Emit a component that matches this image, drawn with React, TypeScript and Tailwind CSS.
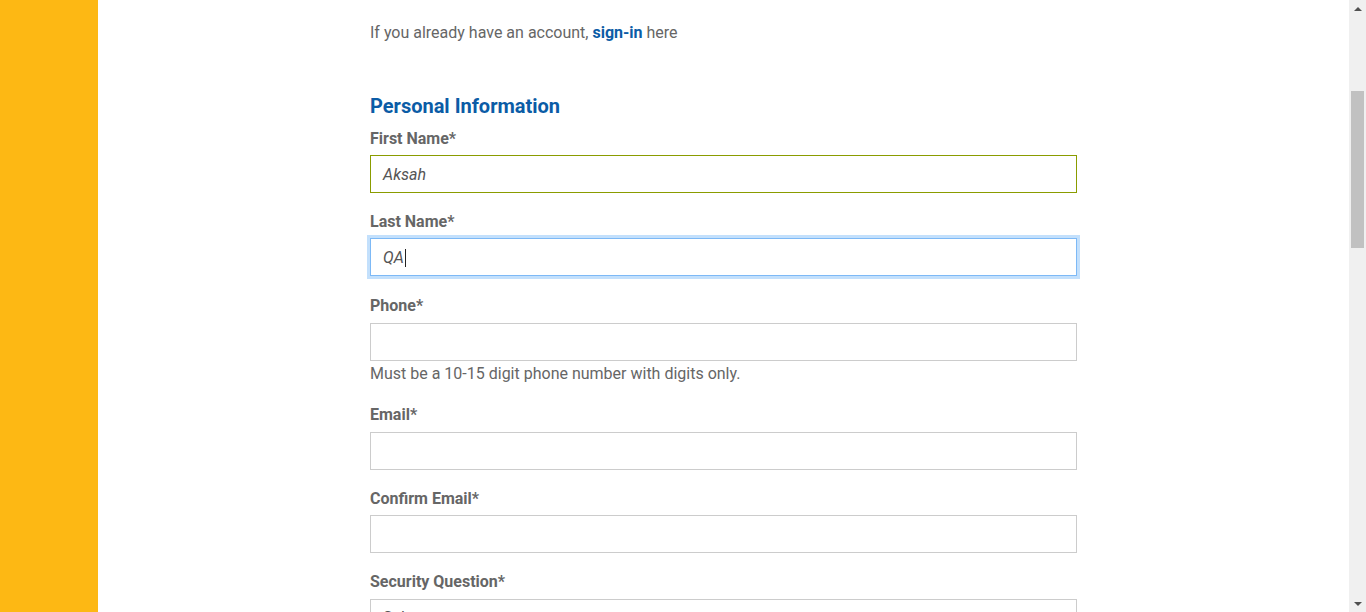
import React from 'react'

const font = { fontFamily: 'Roboto, "Liberation Sans", sans-serif' }

function Label({ children, className = '' }: { children: React.ReactNode; className?: string }) {
  return (
    <div className={`text-[16px] leading-[20px] font-bold text-[#666666] ${className}`}>{children}</div>
  )
}

function Field({
  value,
  variant = 'plain',
  caret = false,
  className = 'mt-[6px]',
}: {
  value?: string
  variant?: 'plain' | 'valid' | 'focus'
  caret?: boolean
  className?: string
}) {
  const border =
    variant === 'valid'
      ? 'border-[#8a9c00]'
      : variant === 'focus'
        ? 'border-[#7db9f6] shadow-[0_0_0_3px_#c3e0fc]'
        : 'border-[#cccccc]'
  return (
    <div className={`h-[38px] w-full border bg-white flex items-center px-3 pt-[2px] ${border} ${className}`}>
      {value && (
        <span className="italic text-[16px] text-[#555555] flex items-center">
          {value}
          {caret && <span className="inline-block w-px h-[18px] bg-[#222222] ml-px" />}
        </span>
      )}
    </div>
  )
}

export default function App() {
  return (
    <div className="flex h-screen w-full overflow-hidden bg-white" style={font}>
      {/* left stripe */}
      <div className="w-[98px] shrink-0 bg-[#fdb814]" />

      {/* form */}
      <main className="flex-1 overflow-hidden">
        <div className="ml-[272px] w-[707px] pt-[23px]">
          <p className="text-[16px] leading-[20px] text-[#666666]">
            If you already have an account, <a className="font-bold text-[#0b5ca6]">sign-in</a> here
          </p>

          <h2 className="mt-[51px] text-[20px] leading-[24px] font-bold text-[#0b5ca6]">Personal Information</h2>

          <Label className="mt-[11px]">First Name*</Label>
          <Field value="Aksah" variant="valid" />

          <Label className="mt-[19px]">Last Name*</Label>
          <Field value="QA" variant="focus" caret />

          <Label className="mt-[20px]">Phone*</Label>
          <Field className="mt-[7px]" />
          <p className="mt-[3px] text-[16px] leading-[20px] text-[#666666]">
            Must be a 10-15 digit phone number with digits only.
          </p>

          <Label className="mt-[21px]">Email*</Label>
          <Field className="mt-[7px]" />

          <Label className="mt-[19px]">Confirm Email*</Label>
          <Field />

          <Label className="mt-[19px]">Security Question*</Label>
          <div className="mt-[7px] h-[38px] w-full border border-[#cccccc] flex items-center px-3 text-[16px] text-[#555555]">
            Select...
          </div>
        </div>
      </main>

      {/* scrollbar */}
      <div className="w-[17px] shrink-0 bg-[#f0f0f0] flex flex-col items-center">
        <div className="h-[17px] flex items-center justify-center">
          <div className="w-0 h-0 border-l-[4px] border-r-[4px] border-b-[4px] border-l-transparent border-r-transparent border-b-[#505050]" />
        </div>
        <div className="mt-[74px] h-[157px] w-[13px] bg-[#c1c1c1]" />
        <div className="flex-1" />
        <div className="h-[17px] flex items-center justify-center">
          <div className="w-0 h-0 border-l-[4px] border-r-[4px] border-t-[4px] border-l-transparent border-r-transparent border-t-[#505050]" />
        </div>
      </div>
    </div>
  )
}
